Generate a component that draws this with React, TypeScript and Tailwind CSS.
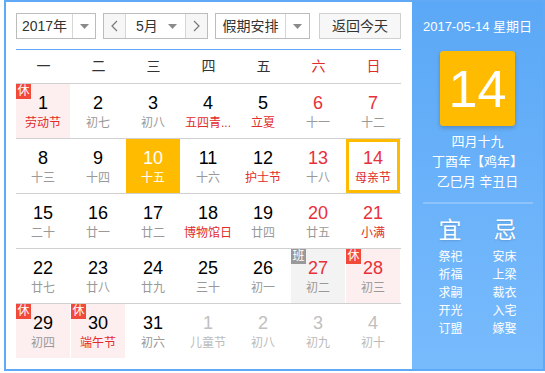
import React from "react";

type Cell = {
  d: number;
  l: string;
  red?: boolean; // red number
  lred?: boolean; // red lunar
  rest?: boolean;
  work?: boolean;
  sel?: boolean;
  today?: boolean;
  other?: boolean;
};

const rows: Cell[][] = [
  [
    { d: 1, l: "劳动节", lred: true, rest: true },
    { d: 2, l: "初七" },
    { d: 3, l: "初八" },
    { d: 4, l: "五四青...", lred: true },
    { d: 5, l: "立夏", lred: true },
    { d: 6, l: "十一", red: true },
    { d: 7, l: "十二", red: true },
  ],
  [
    { d: 8, l: "十三" },
    { d: 9, l: "十四" },
    { d: 10, l: "十五", sel: true },
    { d: 11, l: "十六" },
    { d: 12, l: "护士节", lred: true },
    { d: 13, l: "十八", red: true },
    { d: 14, l: "母亲节", red: true, lred: true, today: true },
  ],
  [
    { d: 15, l: "二十" },
    { d: 16, l: "廿一" },
    { d: 17, l: "廿二" },
    { d: 18, l: "博物馆日", lred: true },
    { d: 19, l: "廿四" },
    { d: 20, l: "廿五", red: true },
    { d: 21, l: "小满", red: true, lred: true },
  ],
  [
    { d: 22, l: "廿七" },
    { d: 23, l: "廿八" },
    { d: 24, l: "廿九" },
    { d: 25, l: "三十" },
    { d: 26, l: "初一" },
    { d: 27, l: "初二", red: true, work: true },
    { d: 28, l: "初三", red: true, rest: true },
  ],
  [
    { d: 29, l: "初四", rest: true },
    { d: 30, l: "端午节", lred: true, rest: true },
    { d: 31, l: "初六" },
    { d: 1, l: "儿童节", other: true },
    { d: 2, l: "初八", other: true },
    { d: 3, l: "初九", other: true },
    { d: 4, l: "初十", other: true },
  ],
];

const FONT = {
  fontFamily:
    '"Liberation Sans", Arial, "Noto Sans CJK SC", sans-serif',
};

function Caret() {
  return (
    <svg width="9" height="5" viewBox="0 0 9 5">
      <path d="M0 0 L9 0 L4.5 5 Z" fill="#8a8a8a" />
    </svg>
  );
}

function Chevron({ dir }: { dir: "l" | "r" }) {
  return (
    <svg width="7" height="12" viewBox="0 0 7 12">
      <path
        d={dir === "l" ? "M6 1 L1 6 L6 11" : "M1 1 L6 6 L1 11"}
        stroke="#777"
        strokeWidth="1.2"
        fill="none"
      />
    </svg>
  );
}

function DayCell({ c }: { c: Cell }) {
  let bg = "bg-white";
  if (c.rest) bg = "bg-[#fdefef]";
  if (c.work) bg = "bg-[#f3f3f3]";
  if (c.sel) bg = "bg-[#ffbb00]";
  let numColor = "text-black";
  if (c.red) numColor = "text-[#e8303a]";
  if (c.other) numColor = "text-[#c0c0c0]";
  if (c.sel) numColor = "text-white";
  let lColor = "text-[#999]";
  if (c.lred) lColor = "text-[#e22b2b]";
  if (c.other) lColor = "text-[#bbb]";
  if (c.sel) lColor = "text-white";
  return (
    <div className="w-[55px] h-[54px]">
      <div
        className={`relative w-[54px] h-[54px] ${bg} ${
          c.today ? "border-[3px] border-[#ffbb00]" : ""
        } flex flex-col items-center ${c.today ? "pt-[6px]" : "pt-[9px]"}`}
      >
        {c.rest && (
          <div className="absolute left-0 top-0 w-[15px] h-[15px] bg-[#f24a3a] text-white text-[12px] leading-[15px] text-center">
            休
          </div>
        )}
        {c.work && (
          <div className="absolute left-0 top-0 w-[15px] h-[15px] bg-[#999] text-white text-[12px] leading-[15px] text-center">
            班
          </div>
        )}
        <div className={`text-[18px] leading-[20px] ${numColor}`}>{c.d}</div>
        <div
          className={`mt-[2px] text-[12px] leading-[16px] whitespace-nowrap ${lColor}`}
        >
          {c.l}
        </div>
      </div>
    </div>
  );
}

export default function App() {
  const weekdays = ["一", "二", "三", "四", "五", "六", "日"];
  return (
    <div
      className="w-[545px] h-[373px] bg-white overflow-hidden"
      style={FONT}
    >
      <div className="ml-[4px] w-[541px] h-[371px] border-2 border-[#5fa9f6] flex">
        {/* left */}
        <div className="w-[406px] pl-[10px] pr-[11px] pt-[11px]">
          <div className="flex h-[26px] text-[14px] text-[#333]">
            <div className="w-[80px] h-[26px] border border-[#bcbcbc] flex">
              <div className="w-[55px] flex items-center justify-center">
                2017年
              </div>
              <div className="flex-1 border-l border-[#d6d6d6] flex items-center justify-center">
                <Caret />
              </div>
            </div>
            <div className="ml-[7px] w-[105px] h-[26px] border border-[#bcbcbc] flex">
              <div className="w-[22px] bg-[#f6f6f6] border-r border-[#d6d6d6] flex items-center justify-center">
                <Chevron dir="l" />
              </div>
              <div className="flex-1 flex items-center">
                <span className="ml-[10px]">5月</span>
                <span className="ml-auto mr-[8px] flex">
                  <Caret />
                </span>
              </div>
              <div className="w-[22px] bg-[#f6f6f6] border-l border-[#d6d6d6] flex items-center justify-center">
                <Chevron dir="r" />
              </div>
            </div>
            <div className="ml-[7px] w-[95px] h-[26px] border border-[#bcbcbc] flex">
              <div className="w-[69px] flex items-center justify-center">
                假期安排
              </div>
              <div className="flex-1 border-l border-[#d6d6d6] flex items-center justify-center">
                <Caret />
              </div>
            </div>
            <div className="ml-[9px] w-[82px] h-[26px] border border-[#d0d0d0] bg-[#f7f7f7] flex items-center justify-center">
              返回今天
            </div>
          </div>
          <div className="mt-[10px] h-px bg-[#5fa9f6]" />
          <div className="flex h-[33px] items-center text-[14px]">
            {weekdays.map((w, i) => (
              <div
                key={w}
                className={`w-[55px] text-center ${
                  i >= 5 ? "text-[#e22b2b]" : "text-[#333]"
                }`}
              >
                {w}
              </div>
            ))}
          </div>
          <div className="h-px bg-[#d0d0d0]" />
          {rows.map((r, ri) => (
            <div key={ri}>
              <div className="flex">
                {r.map((c, ci) => (
                  <DayCell key={ci} c={c} />
                ))}
              </div>
              {ri < rows.length - 1 && <div className="h-px bg-[#d0d0d0]" />}
            </div>
          ))}
        </div>
        {/* right */}
        <div className="w-[131px] bg-gradient-to-b from-[#5ba8f6] to-[#78bbfd] flex flex-col items-center pt-[17px] text-white">
          <div className="text-[13px] leading-[16px] whitespace-nowrap">
            2017-05-14 星期日
          </div>
          <div className="mt-[16px] w-[75px] h-[75px] rounded-[3px] bg-[#ffbb00] shadow-[0_2px_4px_rgba(0,0,0,0.2)] flex items-center justify-center text-[52px] leading-none">
            14
          </div>
          <div className="mt-[6px] text-[13px] leading-[20px] text-center whitespace-nowrap">
            <div>四月十九</div>
            <div>丁酉年【鸡年】</div>
            <div>乙巳月 辛丑日</div>
          </div>
          <div className="mt-[10px] w-[110px] h-[2px] bg-[#8cc3fb]" />
          <div className="mt-[12px] flex w-[110px] justify-between px-[16px] text-[23px] leading-[28px] [text-shadow:0_1px_2px_rgba(0,0,0,0.15)]">
            <span>宜</span>
            <span>忌</span>
          </div>
          <div className="mt-[4px] flex w-[110px] justify-between px-[16px] text-[12px] leading-[18px]">
            <div className="flex flex-col">
              <span>祭祀</span>
              <span>祈福</span>
              <span>求嗣</span>
              <span>开光</span>
              <span>订盟</span>
            </div>
            <div className="flex flex-col">
              <span>安床</span>
              <span>上梁</span>
              <span>裁衣</span>
              <span>入宅</span>
              <span>嫁娶</span>
            </div>
          </div>
        </div>
      </div>
    </div>
  );
}
